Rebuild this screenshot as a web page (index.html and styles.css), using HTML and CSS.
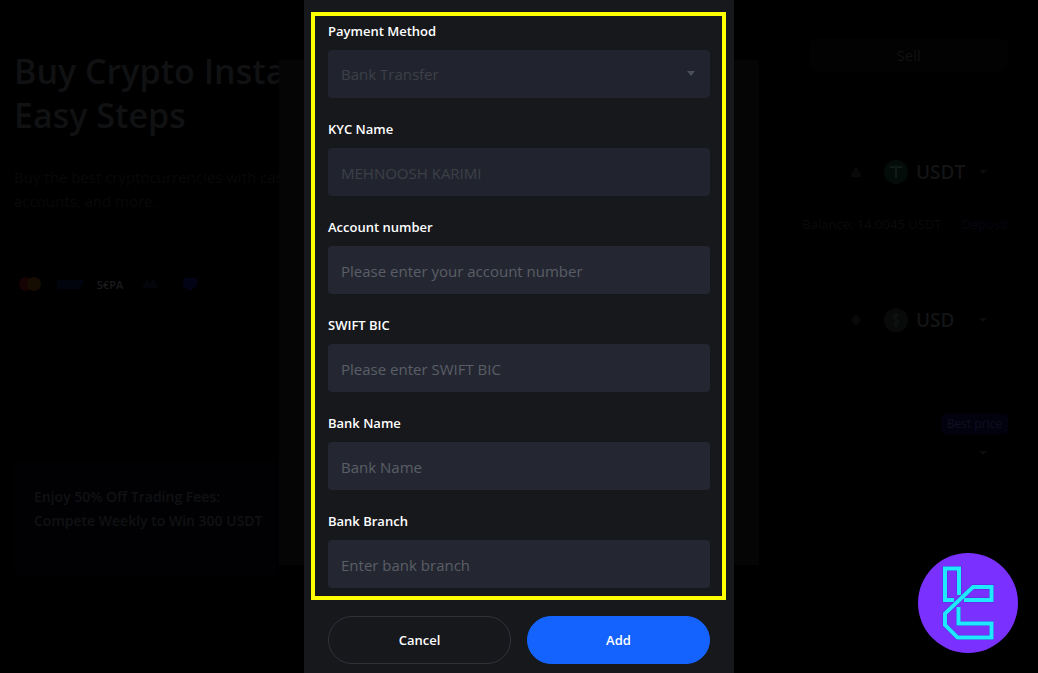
FILE: index.html
```html
<!DOCTYPE html>
<html lang="en">
<head>
    <meta charset="utf-8">
    <title>Add Payment Method</title>
    <link rel="stylesheet" href="styles.css">
</head>
<body>
    <main class="page">
        <section class="hero">
            <h1>Buy Crypto Instantly<br>Easy Steps</h1>
            <p class="intro">Buy the best cryptocurrencies with cards,<br>accounts, and more.</p>
            <div class="methods">
                <svg width="32" height="20" viewBox="0 0 32 20"><circle cx="12" cy="10" r="7" fill="#170303"/><circle cx="20" cy="10" r="7" fill="#150d02"/></svg>
                <svg width="32" height="20" viewBox="0 0 32 20"><path d="M2 6h28l-4 9H4z" fill="#02040d"/></svg>
                <span class="sepa">S€PA</span>
                <svg width="32" height="20" viewBox="0 0 32 20"><path d="M8 14l5-9 3 5 4-5 4 9z" fill="#03050a"/></svg>
                <svg width="32" height="20" viewBox="0 0 32 20"><path d="M9 4h14v8l-7 5-7-5z" fill="#030316"/></svg>
            </div>
            <div class="promo">Enjoy 50% Off Trading Fees:<br>Compete Weekly to Win 300 USDT</div>
        </section>

        <section class="trade">
            <button class="tab" type="button">Sell</button>
            <div class="coin">
                <svg width="16" height="16" viewBox="0 0 16 16"><path d="M8 2l6 11H2z" fill="#080909"/></svg>
                <svg width="24" height="24" viewBox="0 0 24 24"><circle cx="12" cy="12" r="12" fill="#040c0a"/><path d="M6 7h12M12 7v11" fill="none" stroke="#101a16" stroke-width="2"/></svg>
                <span class="code">USDT</span>
                <svg width="10" height="6" viewBox="0 0 10 6"><path d="M1 1h8L5 5z" fill="#0b0c0d"/></svg>
            </div>
            <div class="balance"><span>Balance: 14.0045 USDT</span><a href="#">Deposit</a></div>
            <div class="coin">
                <svg width="16" height="16" viewBox="0 0 16 16"><path d="M8 2l5 6-5 6-5-6z" fill="#080909"/></svg>
                <svg width="24" height="24" viewBox="0 0 24 24"><circle cx="12" cy="12" r="12" fill="#070a09"/><path d="M15 8c-2-2-6-1-6 1s6 3 6 5-4 3-6 1M12 5v14" fill="none" stroke="#0d1110" stroke-width="2"/></svg>
                <span class="code">USD</span>
                <svg width="10" height="6" viewBox="0 0 10 6"><path d="M1 1h8L5 5z" fill="#0b0c0d"/></svg>
            </div>
            <span class="best">Best price</span>
            <svg class="more" width="10" height="6" viewBox="0 0 10 6"><path d="M1 1h8L5 5z" fill="#0b0c0d"/></svg>
        </section>
    </main>

    <div class="backdrop">
        <div class="under"></div>
    </div>

    <div class="overlay">
        <form class="dialog">
            <div class="frame">
                <div class="field">
                    <label for="method">Payment Method</label>
                    <div class="select">
                        <select id="method" disabled>
                            <option>Bank Transfer</option>
                        </select>
                        <svg class="arrow" width="10" height="6" viewBox="0 0 10 6"><path d="M1 0h8L5 5z" fill="#4b4f57"/></svg>
                    </div>
                </div>
                <div class="field">
                    <label for="kyc">KYC Name</label>
                    <input type="text" id="kyc" value="MEHNOOSH KARIMI" disabled>
                </div>
                <div class="field">
                    <label for="account">Account number</label>
                    <input type="text" id="account" placeholder="Please enter your account number">
                </div>
                <div class="field">
                    <label for="swift">SWIFT BIC</label>
                    <input type="text" id="swift" placeholder="Please enter SWIFT BIC">
                </div>
                <div class="field">
                    <label for="bank">Bank Name</label>
                    <input type="text" id="bank" placeholder="Bank Name">
                </div>
                <div class="field">
                    <label for="branch">Bank Branch</label>
                    <input type="text" id="branch" placeholder="Enter bank branch">
                </div>
            </div>
            <div class="actions">
                <button type="button" class="cancel">Cancel</button>
                <button type="submit" class="add">Add</button>
            </div>
        </form>
    </div>

    <a class="logo" href="#" aria-label="Home">
        <svg width="100" height="100" viewBox="0 0 100 100">
            <circle cx="50" cy="50" r="50" fill="#7a30ff"/>
            <g fill="none" stroke="#4a2fd8" stroke-width="5">
                <path d="M36 47H27V15.500H41V42"/>
                <path d="M46 47H73.500V34H55L27 60.500V72L39.500 84.500H73.500V70.500H40.500V54"/>
            </g>
            <g fill="none" stroke="#1fe9ff" stroke-width="4">
                <path d="M36 47H27V15.500H41V42"/>
                <path d="M46 47H73.500V34H55L27 60.500V72L39.500 84.500H73.500V70.500H40.500V54"/>
            </g>
        </svg>
    </a>
</body>
</html>
```
FILE: styles.css
```css
* {
    box-sizing: border-box;
}

body {
    margin: 0;
    min-height: 100vh;
    overflow: hidden;
    background-color: #000;
    font-family: "Open Sans", "Noto Sans", sans-serif;
    font-size: 14px;
    color: #fff;
}

button,
input,
select {
    font-family: inherit;
}

/* dimmed page */
.page {
    display: grid;
    grid-template-columns: 3fr 2fr;
    padding: 0 30px 0 14px;
}

.hero {
    padding-top: 49px;
}

h1 {
    margin: 0 0 28px;
    font-size: 34px;
    line-height: 44px;
    font-weight: 600;
    color: #101112;
}

.intro {
    margin: 0;
    font-size: 15px;
    line-height: 24px;
    color: #08090a;
}

.methods {
    display: flex;
    align-items: center;
    gap: 8px;
    height: 20px;
    margin-top: 61px;
}

.sepa {
    width: 32px;
    font-size: 11px;
    font-weight: 600;
    text-align: center;
    color: #1b1c1e;
}

.promo {
    width: 262px;
    margin-top: 167px;
    padding: 24px 20px 42px;
    background-color: #010103;
    font-size: 14px;
    line-height: 24px;
    font-weight: 600;
    white-space: nowrap;
    color: #101113;
}

.trade {
    display: flex;
    flex-direction: column;
    align-items: flex-end;
    padding-top: 38px;
}

.tab {
    width: 50%;
    height: 34px;
    margin-bottom: 84px;
    border: 0;
    border-radius: 8px;
    background-color: #020202;
    font-size: 15px;
    color: #101112;
}

.coin {
    display: flex;
    align-items: center;
    gap: 20px;
    width: 160px;
    height: 32px;
    margin-bottom: 24px;
}

.coin svg {
    flex-shrink: 0;
}

.code {
    flex: 1;
    margin: 0 -8px 0 -12px;
    font-size: 19px;
    font-weight: 600;
    color: #131415;
}

.coin > svg:last-child {
    margin-right: 20px;
}

.balance {
    display: flex;
    gap: 20px;
    height: 24px;
    margin-bottom: 68px;
    font-size: 13px;
    line-height: 24px;
    color: #0a0b0c;
}

.balance a {
    color: #060710;
    text-decoration: none;
}

.best {
    margin-top: 54px;
    padding: 0 6px;
    border-radius: 4px;
    background-color: #02020f;
    font-size: 12px;
    line-height: 20px;
    color: #0d0f20;
}

.more {
    margin: 16px 20px 0 0;
}

/* dialogs */
.backdrop,
.overlay {
    position: fixed;
    inset: 0;
    display: flex;
    justify-content: center;
}

.backdrop {
    padding: 60px 0 108px;
}

.under {
    width: 480px;
    background-color: #050505;
}

.dialog {
    width: 100%;
    max-width: 430px;
    min-height: 100%;
    padding: 12px 8px 8px 7px;
    background-color: #17181c;
}

.frame {
    display: flex;
    flex-direction: column;
    gap: 21px;
    padding: 5px 12px 8px 13px;
    border: 4px solid #ff0;
}

.field {
    display: flex;
    flex-direction: column;
    gap: 9px;
}

.field label {
    font-size: 13px;
    line-height: 20px;
    font-weight: 600;
}

.field input,
.field select {
    width: 100%;
    height: 48px;
    padding: 2px 13px 0;
    border: 0;
    border-radius: 4px;
    background-color: #242731;
    font-size: 15px;
    color: #fff;
}

.field input::placeholder {
    color: #5a5e67;
    opacity: 1;
}

.field input:disabled,
.field select:disabled {
    background-color: #21242e;
    color: #3d4048;
    opacity: 1;
}

.select {
    position: relative;
}

.select select {
    display: block;
    padding-top: 0;
    appearance: none;
}

.arrow {
    position: absolute;
    top: 21px;
    right: 14px;
}

.actions {
    display: flex;
    gap: 16px;
    padding: 16px 16px 0 17px;
}

.actions button {
    flex: 1 1 0;
    height: 48px;
    padding: 0;
    border: 1px solid #303238;
    border-radius: 24px;
    background-color: transparent;
    font-size: 13px;
    font-weight: 600;
    color: #fff;
    cursor: pointer;
}

.actions .add {
    border-color: #1463ff;
    background-color: #1463ff;
}

.logo {
    position: fixed;
    right: 20px;
    bottom: 20px;
    display: flex;
}
```
